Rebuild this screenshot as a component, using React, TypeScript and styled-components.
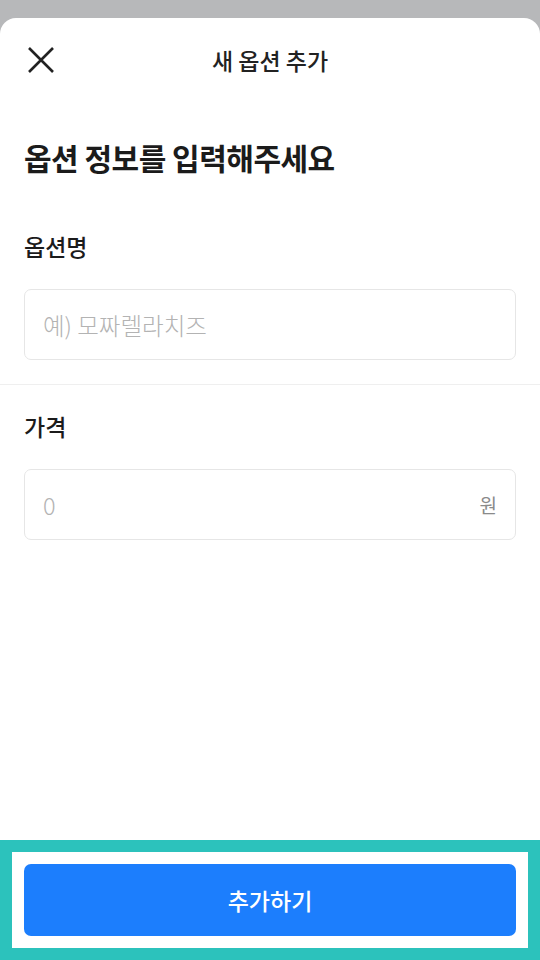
import styled, { createGlobalStyle } from 'styled-components'

const GlobalStyle = createGlobalStyle`
  html, body {
    margin: 0;
    padding: 0;
    background: #b7b8ba;
    font-family: 'Noto Sans CJK KR', 'Noto Sans', sans-serif;
  }
  * { box-sizing: border-box; }
`

const Sheet = styled.div`
  margin-top: 18px;
  height: 942px;
  background: #fff;
  border-radius: 16px 16px 0 0;
  display: flex;
  flex-direction: column;
  overflow: hidden;
`

const Header = styled.header`
  position: relative;
  height: 84px;
  display: flex;
  align-items: center;
  justify-content: center;
`

const CloseButton = styled.button`
  position: absolute;
  left: 24px;
  top: 25px;
  width: 34px;
  height: 34px;
  padding: 0;
  border: 0;
  background: transparent;
  display: flex;
  align-items: center;
  justify-content: center;
`

const Title = styled.h1`
  margin: 0;
  font-size: 23px;
  font-weight: 500;
  color: #222;
`

const Body = styled.main`
  flex: 1;
`

const Section = styled.section`
  padding: 0 24px;
`

const Heading = styled.h2`
  margin: 37px 0 0;
  font-size: 30px;
  line-height: 36px;
  font-weight: 700;
  color: #1b1b1b;
  letter-spacing: -0.5px;
`

const Label = styled.label<{ $top: number }>`
  display: block;
  margin-top: ${p => p.$top}px;
  font-size: 23px;
  line-height: 30px;
  font-weight: 500;
  color: #1b1b1b;
`

const Field = styled.div`
  margin-top: 28px;
  height: 71px;
  border: 1.5px solid #e6e6e6;
  border-radius: 7px;
  display: flex;
  align-items: center;
  padding: 0 18px;
`

const Input = styled.input`
  flex: 1;
  border: 0;
  outline: none;
  background: transparent;
  font-family: inherit;
  font-size: 23.5px;
  font-weight: 300;
  color: #222;
  padding: 0;
  &::placeholder {
    color: #b3b3b3;
  }
`

const Unit = styled.span`
  font-size: 19px;
  color: #8a8a8a;
`

const Divider = styled.hr`
  margin: 24px 0 0;
  border: 0;
  border-top: 1px solid #efefef;
`

const Footer = styled.footer`
  height: 120px;
  border: 12px solid #2cc2bc;
  padding: 12px;
  background: #fff;
`

const SubmitButton = styled.button`
  width: 100%;
  height: 72px;
  border: 0;
  border-radius: 7px;
  background: #1c7efd;
  color: #fff;
  font-family: inherit;
  font-size: 23px;
  font-weight: 500;
`

export default function App() {
  return (
    <>
      <GlobalStyle />
      <Sheet>
        <Header>
          <CloseButton aria-label="닫기">
            <svg width="28" height="28" viewBox="0 0 28 28">
              <path d="M2 2L26 26M26 2L2 26" stroke="#222" strokeWidth="2.6" strokeLinecap="butt" />
            </svg>
          </CloseButton>
          <Title>새 옵션 추가</Title>
        </Header>
        <Body>
          <Section>
            <Heading>옵션 정보를 입력해주세요</Heading>
            <Label $top={56}>옵션명</Label>
            <Field>
              <Input placeholder="예) 모짜렐라치즈" />
            </Field>
          </Section>
          <Divider />
          <Section>
            <Label $top={26}>가격</Label>
            <Field>
              <Input placeholder="0" inputMode="numeric" />
              <Unit>원</Unit>
            </Field>
          </Section>
        </Body>
        <Footer>
          <SubmitButton>추가하기</SubmitButton>
        </Footer>
      </Sheet>
    </>
  )
}
